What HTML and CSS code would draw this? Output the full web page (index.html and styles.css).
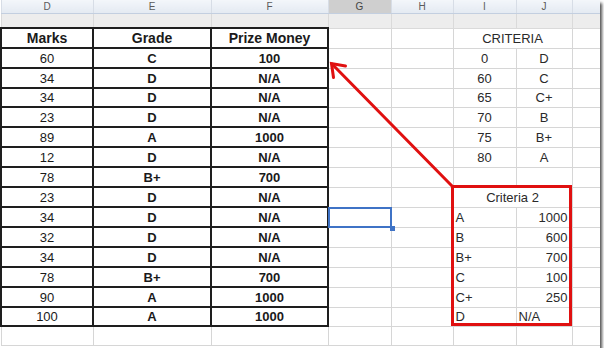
FILE: index.html
```html
<!DOCTYPE html>
<html>
<head>
<meta charset="utf-8">
<title>Grades</title>
<link rel="stylesheet" href="styles.css">
</head>
<body>
<div class="sheet">
  <table class="grid">
    <colgroup>
      <col class="c-d"><col class="c-e"><col class="c-f"><col class="c-g">
      <col class="c-h"><col class="c-i"><col class="c-j"><col class="c-k">
    </colgroup>
    <tr class="colhead">
      <th>D</th><th>E</th><th>F</th><th class="active">G</th><th>H</th><th>I</th><th>J</th><th></th>
    </tr>
    <tr class="band">
      <td class="tb-top"></td><td class="tb-top"></td><td class="tb-top"></td><td></td><td></td><td></td><td></td><td></td>
    </tr>
    <tr class="r20">
      <td class="tb hd">Marks</td><td class="tb hd">Grade</td><td class="tb hd">Prize Money</td><td></td><td></td><td colspan="2" class="ctr">CRITERIA</td><td></td>
    </tr>
    <tr class="r20">
      <td class="tb">60</td><td class="tb bold">C</td><td class="tb bold">100</td><td></td><td></td><td class="ctr">0</td><td class="ctr">D</td><td></td>
    </tr>
    <tr class="r20">
      <td class="tb">34</td><td class="tb bold">D</td><td class="tb bold">N/A</td><td></td><td></td><td class="ctr">60</td><td class="ctr">C</td><td></td>
    </tr>
    <tr class="r19">
      <td class="tb">34</td><td class="tb bold">D</td><td class="tb bold">N/A</td><td></td><td></td><td class="ctr">65</td><td class="ctr">C+</td><td></td>
    </tr>
    <tr class="r20">
      <td class="tb">23</td><td class="tb bold">D</td><td class="tb bold">N/A</td><td></td><td></td><td class="ctr">70</td><td class="ctr">B</td><td></td>
    </tr>
    <tr class="r20">
      <td class="tb">89</td><td class="tb bold">A</td><td class="tb bold">1000</td><td></td><td></td><td class="ctr">75</td><td class="ctr">B+</td><td></td>
    </tr>
    <tr class="r20">
      <td class="tb">12</td><td class="tb bold">D</td><td class="tb bold">N/A</td><td></td><td></td><td class="ctr">80</td><td class="ctr">A</td><td></td>
    </tr>
    <tr class="r20">
      <td class="tb">78</td><td class="tb bold">B+</td><td class="tb bold">700</td><td></td><td></td><td></td><td></td><td></td>
    </tr>
    <tr class="r20">
      <td class="tb">23</td><td class="tb bold">D</td><td class="tb bold">N/A</td><td></td><td></td><td colspan="2" class="ctr">Criteria 2</td><td></td>
    </tr>
    <tr class="r20">
      <td class="tb">34</td><td class="tb bold">D</td><td class="tb bold">N/A</td><td class="selected"><span class="handle"></span></td><td></td><td class="lft">A</td><td class="rgt">1000</td><td></td>
    </tr>
    <tr class="r20">
      <td class="tb">32</td><td class="tb bold">D</td><td class="tb bold">N/A</td><td></td><td></td><td class="lft">B</td><td class="rgt">600</td><td></td>
    </tr>
    <tr class="r20">
      <td class="tb">34</td><td class="tb bold">D</td><td class="tb bold">N/A</td><td></td><td></td><td class="lft">B+</td><td class="rgt">700</td><td></td>
    </tr>
    <tr class="r20">
      <td class="tb">78</td><td class="tb bold">B+</td><td class="tb bold">700</td><td></td><td></td><td class="lft">C</td><td class="rgt">100</td><td></td>
    </tr>
    <tr class="r20">
      <td class="tb">90</td><td class="tb bold">A</td><td class="tb bold">1000</td><td></td><td></td><td class="lft">C+</td><td class="rgt">250</td><td></td>
    </tr>
    <tr class="r19">
      <td class="tb">100</td><td class="tb bold">A</td><td class="tb bold">1000</td><td></td><td></td><td class="lft">D</td><td class="lft">N/A</td><td></td>
    </tr>
    <tr class="r20">
      <td></td><td></td><td></td><td></td><td></td><td></td><td></td><td></td>
    </tr>
  </table>

  <div class="callout"></div>

  <svg class="arrow" width="600" height="348" viewBox="0 0 600 348">
    <g stroke="#e01010" stroke-width="3" stroke-linecap="round" fill="none">
      <line x1="452" y1="186" x2="332" y2="64"/>
      <polyline points="345.5,66 331.5,63.5 333.5,77.5"/>
    </g>
  </svg>
</div>
</body>
</html>
```

FILE: styles.css
```css
html, body {
  margin: 0;
  padding: 0;
  background: #ffffff;
}

.sheet {
  position: relative;
  width: 600px;
  height: 348px;
  overflow: hidden;
  background: #ffffff;
  box-shadow: 2px 3px 3px rgba(0, 0, 0, 0.7);
}

.grid {
  border-collapse: collapse;
  table-layout: fixed;
  width: 600px;
  font-family: "Liberation Sans", Arial, sans-serif;
  font-size: 13px;
  color: #222;
}

.c-d { width: 92px; }
.c-e { width: 118px; }
.c-f { width: 117px; }
.c-g { width: 63px; }
.c-h { width: 62px; }
.c-i { width: 63px; }
.c-j { width: 56px; }
.c-k { width: 29px; }

.grid td,
.grid th {
  border: 1px solid #d6d6d6;
  padding: 0 3px;
  overflow: hidden;
  white-space: nowrap;
  vertical-align: middle;
  line-height: 15px;
}

/* column letters */
.colhead th {
  height: 13px;
  padding: 0;
  font-weight: normal;
  font-size: 10px;
  line-height: 12px;
  color: #5a5a5a;
  background: linear-gradient(#f3f6fa, #e4eaf2);
  border-top: none;
  border-left: 1px solid #d7dde6;
  border-right: 1px solid #d7dde6;
  border-bottom: 1px solid #c3cfe0;
}

.colhead th.active {
  background: #cfcfcf;
  color: #444;
}

.band td {
  height: 13px;
  padding: 0;
  background: #ededed;
  border-color: #dadada;
}

.band td.tb-top {
  border-bottom: 2px solid #1e1e1e;
}

.r20 td { height: 18px; }
.r19 td { height: 17px; }

/* the bordered marks table on the left */
.tb {
  border: 2px solid #1e1e1e !important;
  text-align: center;
  color: #1a1a1a;
}

.hd {
  font-weight: bold;
  font-size: 14px;
}

.bold { font-weight: bold; }

.ctr { text-align: center; color: #2a2a2a; }
.grid .lft { text-align: left; color: #2a2a2a; padding-left: 2px; }
.grid .rgt { text-align: right; color: #2a2a2a; padding-right: 4px; }

/* active cell */
.grid .selected {
  position: relative;
  overflow: visible;
}

.selected::after {
  content: "";
  position: absolute;
  left: -1px;
  top: -1px;
  right: -1px;
  bottom: -1px;
  border: 2px solid #3f73c6;
}

.handle {
  position: absolute;
  right: -4px;
  bottom: -4px;
  width: 5px;
  height: 5px;
  background: #3f73c6;
  z-index: 2;
}

/* red outline around the second criteria table */
.callout {
  position: absolute;
  left: 451px;
  top: 185px;
  width: 115px;
  height: 135px;
  border: 3px solid #e01010;
  pointer-events: none;
}

.arrow {
  position: absolute;
  left: 0;
  top: 0;
  pointer-events: none;
}
```
